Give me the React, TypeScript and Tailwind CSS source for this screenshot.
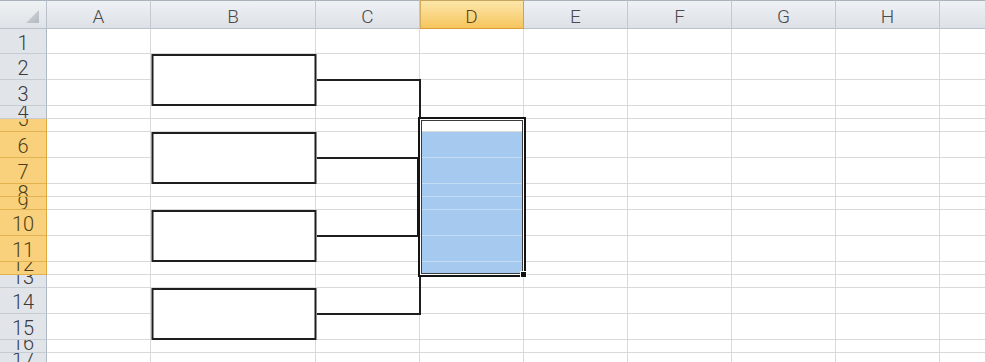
import React from 'react';

const COLS = ['A', 'B', 'C', 'D', 'E', 'F', 'G', 'H', 'I'];
const ROWS = [1, 2, 3, 4, 5, 6, 7, 8, 9, 10, 11, 12, 13, 14, 15, 16, 17];

const SHIFT: Record<number, string> = {
  1: 'translate-y-[1.5px]',
  2: 'translate-y-[1.5px]',
  3: 'translate-y-[1.5px]',
  4: 'translate-y-[0px]',
  5: '-translate-y-[6px]',
  6: 'translate-y-[1.5px]',
  7: 'translate-y-[1.5px]',
  8: 'translate-y-[3px]',
  9: 'translate-y-[0px]',
  10: 'translate-y-[1.5px]',
  11: 'translate-y-[1.5px]',
  12: '-translate-y-[4px]',
  13: '-translate-y-[4px]',
  14: 'translate-y-[1.5px]',
  15: 'translate-y-[1.5px]',
  16: '-translate-y-[3px]',
  17: 'translate-y-[1px]',
};

function Corner() {
  return (
    <div className="flex items-end justify-end pr-[7px] pb-[5px] border-t border-r border-b border-t-[#aab2bc] border-r-[#b9c1ca] border-b-[#b9c1ca] bg-linear-to-b from-[#eef1f4] to-[#dfe3e8]">
      <svg width="13" height="13" viewBox="0 0 13 13">
        <defs>
          <linearGradient id="tri" x1="0" y1="0" x2="1" y2="1">
            <stop offset="0" stopColor="#d4d8dd" />
            <stop offset="1" stopColor="#b3b9c1" />
          </linearGradient>
        </defs>
        <polygon points="13,0 13,13 0,13" fill="url(#tri)" />
      </svg>
    </div>
  );
}

function ColHeader({ label }: { label: string }) {
  if (label === 'D') {
    return (
      <div className="flex items-center justify-center border-t border-r border-b border-t-[#c9a55b] border-r-[#c9a55b] border-b-[#d99b3a] bg-linear-to-b from-[#fce6a8] to-[#f6c55c] shadow-[inset_1px_0_0_#d4ad5e] text-[19px] font-light text-[#5a4715]">
        <span className="translate-y-[2px] leading-none">{label}</span>
      </div>
    );
  }
  return (
    <div className="flex items-center justify-center overflow-hidden border-t border-r border-b border-t-[#aab2bc] border-r-[#c3c9d1] border-b-[#b9c1ca] bg-linear-to-b from-[#eef1f4] to-[#dde1e7] text-[19px] font-light text-[#4a4a4a]">
      {label !== 'I' && <span className="translate-y-[2px] leading-none">{label}</span>}
    </div>
  );
}

function RowHeader({ n }: { n: number }) {
  const sel = n >= 5 && n <= 12;
  return (
    <div
      className={
        sel
          ? 'flex items-center justify-center overflow-hidden border-r border-b border-r-[#e0a83c] border-b-[#e2b24f] bg-[#f9d17c] text-[20px] font-light text-[#4d3d12]'
          : 'flex items-center justify-center overflow-hidden border-r border-b border-r-[#aeb8c3] border-b-[#c6ccd4] bg-[#e1e5ea] text-[20px] font-light text-[#3a3a3a]'
      }
    >
      <span className={'leading-[15px] ' + SHIFT[n]}>{n}</span>
    </div>
  );
}

function Cell() {
  return <div className="border-r border-b border-[#d9d9d9] bg-white" />;
}

export default function App() {
  return (
    <div className="w-[985px] h-[362px] overflow-hidden bg-white [font-family:Roboto,sans-serif]">
      <div className="grid">
        {/* base sheet */}
        <div className="col-start-1 row-start-1 grid grid-cols-[47px_104px_165px_104px_104px_104px_104px_104px_104px_104px] grid-rows-[29px_25px_26px_26px_13px_13px_26px_26px_13px_13px_26px_26px_13px_13px_26px_26px_13px_13px]">
          <Corner />
          {COLS.map((c) => (
            <ColHeader key={c} label={c} />
          ))}
          {ROWS.map((r) => (
            <React.Fragment key={r}>
              <RowHeader n={r} />
              {COLS.map((c) => (
                <Cell key={c} />
              ))}
            </React.Fragment>
          ))}
        </div>

        {/* drawn borders & selection */}
        <div className="col-start-1 row-start-1 grid grid-cols-[47px_104px_165px_104px_104px_104px_104px_104px_104px_104px] grid-rows-[29px_25px_26px_26px_13px_13px_26px_26px_13px_13px_26px_26px_13px_13px_26px_26px_13px_13px] pointer-events-none">
          {/* boxes in column B */}
          <div className="col-start-3 row-start-3 row-span-2 translate-x-[0.5px] border-2 border-[#1e1e1e] bg-white" />
          <div className="col-start-3 row-start-7 row-span-2 translate-x-[0.5px] border-2 border-[#1e1e1e] bg-white" />
          <div className="col-start-3 row-start-11 row-span-2 translate-x-[0.5px] border-2 border-[#1e1e1e] bg-white" />
          <div className="col-start-3 row-start-15 row-span-2 translate-x-[0.5px] border-2 border-[#1e1e1e] bg-white" />

          {/* bracket lines in column C */}
          <div className="col-start-4 row-start-3 translate-y-[1px] translate-x-[1px] border-b-2 border-[#1e1e1e]" />
          <div className="col-start-4 row-start-7 translate-y-[1px] translate-x-[1px] border-b-2 border-[#1e1e1e]" />
          <div className="col-start-4 row-start-11 translate-y-[1px] translate-x-[1px] border-b-2 border-[#1e1e1e]" />
          <div className="col-start-4 row-start-15 translate-y-[1px] translate-x-[1px] border-b-2 border-[#1e1e1e]" />
          <div className="col-start-4 row-start-4 row-end-16 translate-x-[1px] translate-y-[1px] border-r-2 border-[#1e1e1e]" />

          {/* selected range fill D6:D12 */}
          <div className="col-start-5 row-start-7 bg-[#a5c9ef] border-b border-[#c3dbf4]" />
          <div className="col-start-5 row-start-8 bg-[#a5c9ef] border-b border-[#c3dbf4]" />
          <div className="col-start-5 row-start-9 bg-[#a5c9ef] border-b border-[#c3dbf4]" />
          <div className="col-start-5 row-start-10 bg-[#a5c9ef] border-b border-[#c3dbf4]" />
          <div className="col-start-5 row-start-11 bg-[#a5c9ef] border-b border-[#c3dbf4]" />
          <div className="col-start-5 row-start-12 bg-[#a5c9ef] border-b border-[#c3dbf4]" />
          <div className="col-start-5 row-start-13 bg-[#a5c9ef]" />

          {/* selection border D5:D12 */}
          <div className="relative col-start-5 row-start-6 row-end-14 -ml-[2px] -mt-[2px] -mr-[2px] -mb-[2px] border-2 border-[#141414] shadow-[inset_0_0_0_1px_#ffffff,inset_0_0_0_2px_#3a3a3a]">
            <div className="absolute -right-[3px] -bottom-[3px] w-[7px] h-[7px] bg-[#111] border border-white" />
          </div>

          {/* thick bracket segment overlapping selection edge */}
          <div className="col-start-5 row-start-8 row-end-12 justify-self-start w-[5px] -ml-[3px] bg-[#141414]" />
        </div>
      </div>
    </div>
  );
}
